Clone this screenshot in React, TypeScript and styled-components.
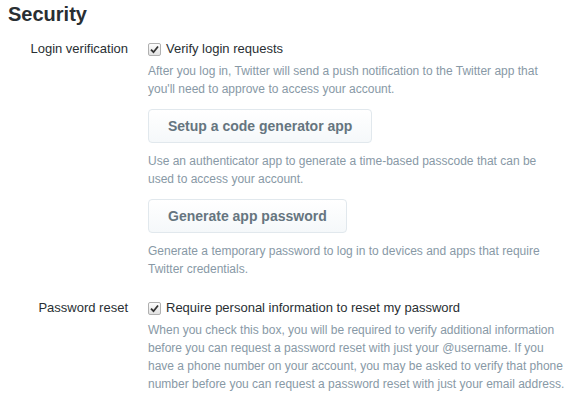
import styled, { createGlobalStyle } from 'styled-components'

//* Page-wide reset
const GlobalStyle = createGlobalStyle`
   html, body {
      margin: 0;
      padding: 0;
      background: #ffffff;
   }
   body {
      font-family: "Liberation Sans", Arial, sans-serif;
      color: #292f33;
   }
`

const Page = styled.div`
   width: 580px;
   padding: 0 8px;
   box-sizing: border-box;
`

const Heading = styled.h2`
   margin: 0;
   font-size: 20px;
   line-height: 28px;
   font-weight: bold;
   color: #292f33;
`

const SettingRow = styled.div<{ $top: number }>`
   display: grid;
   grid-template-columns: 120px 1fr;
   column-gap: 20px;
   margin-top: ${p => p.$top}px;
`

const Label = styled.div`
   text-align: right;
   font-size: 13px;
   line-height: 20px;
   color: #292f33;
`

const Controls = styled.div`
   display: flex;
   flex-direction: column;
   align-items: flex-start;
`

const CheckLine = styled.label`
   display: flex;
   align-items: center;
   gap: 5px;
   font-size: 13px;
   line-height: 20px;
   color: #292f33;
`

const Box = styled.span`
   width: 11px;
   height: 11px;
   border: 1px solid #b0b0b0;
   border-radius: 2px;
   background: linear-gradient(#fdfdfd, #e2e2e2);
   display: inline-flex;
   align-items: center;
   justify-content: center;
`

const Help = styled.p<{ $top: number }>`
   margin: ${p => p.$top}px 0 0;
   font-size: 12px;
   line-height: 18px;
   color: #8899a6;
`

const Button = styled.button`
   margin-top: 11px;
   height: 34px;
   padding: 0 19px;
   border: 1px solid #e1e8ed;
   border-radius: 4px;
   background: linear-gradient(#ffffff, #f5f8fa);
   font-family: "Liberation Sans", Arial, sans-serif;
   font-size: 14px;
   font-weight: bold;
   color: #66757f;
`

const Check: React.FC = () => (
   <Box>
      <svg width="9" height="9" viewBox="0 0 9 9">
         <path d="M1 4.6 L3.5 7.2 L8 1.5" fill="none" stroke="#333" strokeWidth="1.8" />
      </svg>
   </Box>
)

const App: React.FC = () => {
   return (
      <Page>
         <GlobalStyle />
         <Heading>Security</Heading>
         <SettingRow $top={11}>
            <Label>Login verification</Label>
            <Controls>
               <CheckLine><Check />Verify login requests</CheckLine>
               <Help $top={3}>
                  After you log in, Twitter will send a push notification to the Twitter app that<br />
                  you'll need to approve to access your account.
               </Help>
               <Button>Setup a code generator app</Button>
               <Help $top={9}>
                  Use an authenticator app to generate a time-based passcode that can be<br />
                  used to access your account.
               </Help>
               <Button>Generate app password</Button>
               <Help $top={9}>
                  Generate a temporary password to log in to devices and apps that require<br />
                  Twitter credentials.
               </Help>
            </Controls>
         </SettingRow>
         <SettingRow $top={20}>
            <Label>Password reset</Label>
            <Controls>
               <CheckLine><Check />Require personal information to reset my password</CheckLine>
               <Help $top={3}>
                  When you check this box, you will be required to verify additional information<br />
                  before you can request a password reset with just your @username. If you<br />
                  have a phone number on your account, you may be asked to verify that phone<br />
                  number before you can request a password reset with just your email address.
               </Help>
            </Controls>
         </SettingRow>
      </Page>
   )
}

export default App
